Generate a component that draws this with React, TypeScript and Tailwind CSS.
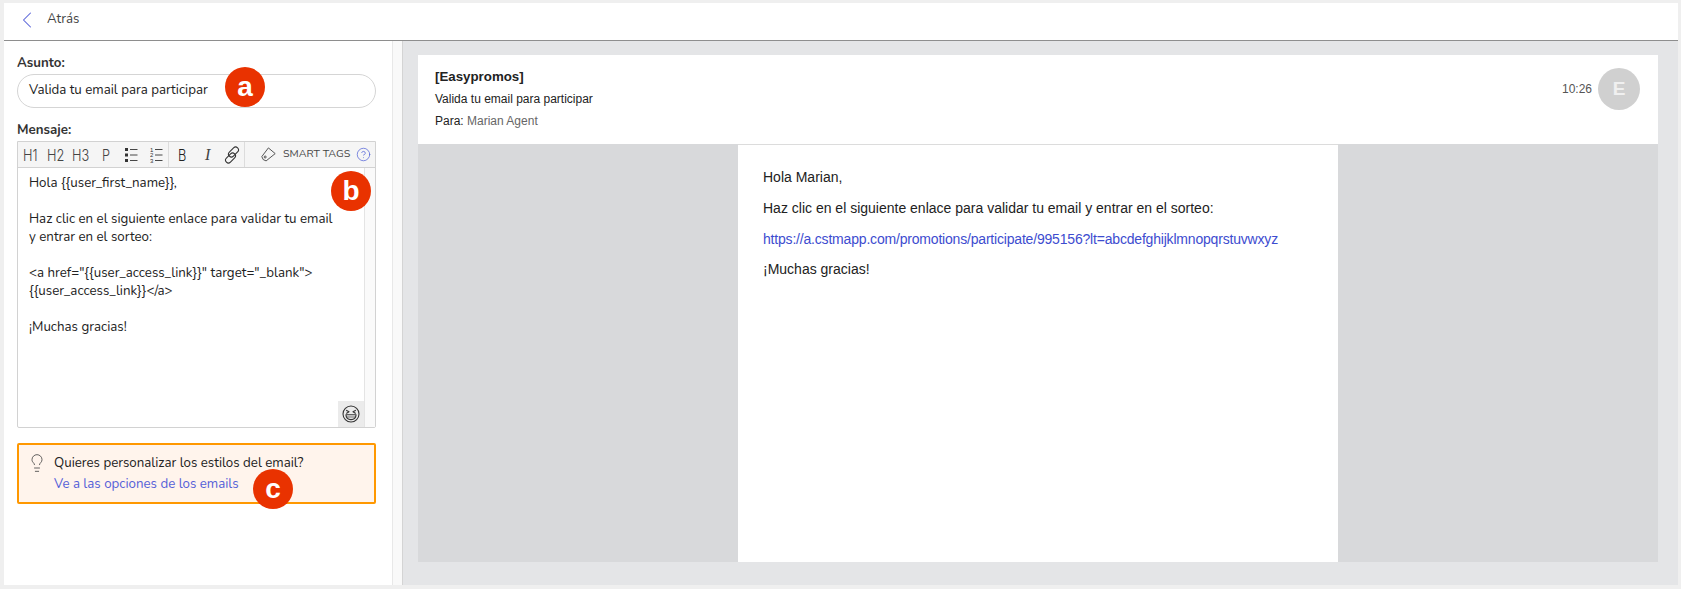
import { ChevronLeft, CircleHelp, Lightbulb } from "lucide-react";

function Badge({ letter, className }: { letter: string; className: string }) {
  return (
    <div className={`absolute flex h-10 w-10 items-center justify-center rounded-full bg-[#e93200] text-[28px] font-bold leading-none text-white font-['Liberation_Sans',sans-serif] ${className}`}>
      <span className="-mt-px">{letter}</span>
    </div>
  );
}

function ListIcon({ numbered }: { numbered?: boolean }) {
  return (
    <svg width="13" height="16" viewBox="0 0 13 16" className="text-[#333]">
      {[2.5, 8, 13.5].map((y, i) =>
        numbered ? (
          <text key={y} x="0" y={y + 2} fontSize="6" fill="currentColor" fontFamily="Liberation Sans">{i + 1}</text>
        ) : (
          <rect key={y} x="0" y={y - 1.5} width="3" height="3" fill="currentColor" />
        )
      )}
      {[2.5, 8, 13.5].map((y) => (
        <path key={y} d={`M5 ${y}H12.5`} stroke="currentColor" strokeWidth="0.9" />
      ))}
    </svg>
  );
}

function ChainIcon() {
  return (
    <svg width="18" height="18" viewBox="0 0 17 17" fill="none" stroke="#333" strokeWidth="1">
      <rect x="7.2" y="0.2" width="5.4" height="11" rx="2.7" transform="rotate(45 9.9 5.7)" />
      <rect x="4.4" y="5.8" width="5.4" height="11" rx="2.7" transform="rotate(45 7.1 11.3)" />
    </svg>
  );
}

function TagIcon() {
  return (
    <svg width="15" height="15" viewBox="0 0 15 15" fill="none" stroke="#444" strokeWidth="0.9" strokeLinejoin="round">
      <path d="M0.8 9.6 L7.4 0.9 L14.2 6.6 L5.1 13.9 Q1.4 13.4 0.8 9.6 Z" />
      <circle cx="4.2" cy="10" r="1" />
    </svg>
  );
}

function LaughIcon() {
  return (
    <svg width="18" height="18" viewBox="0 0 18 18" fill="none" stroke="#333" strokeWidth="1.1" strokeLinejoin="round" strokeLinecap="round">
      <circle cx="9" cy="9" r="8" />
      <path d="M4.6 5.4 L7 6.8 L4.6 8.2" />
      <path d="M13.4 5.4 L11 6.8 L13.4 8.2" />
      <path d="M3.9 9.8 H14.1 Q13.8 14.6 9 14.6 Q4.2 14.6 3.9 9.8 Z" />
      <path d="M4.6 12 H13.4" strokeWidth="0.7" />
    </svg>
  );
}

function Heading({ text, className }: { text: string; className: string }) {
  return (
    <span className={`block text-[16px] font-light leading-none font-['Inter',sans-serif] ${className}`}>
      <span className="inline-block origin-left scale-x-[0.8]">{text}</span>
    </span>
  );
}

export default function App() {
  const ui = "font-['Nunito','Noto_Sans','Open_Sans',sans-serif]";
  return (
    <div className={`flex h-[589px] w-[1681px] flex-col overflow-hidden bg-[#efefef] pb-1 pl-1 pr-[3px] pt-[3px] ${ui}`}>
      <header className="flex h-[38px] shrink-0 items-center border-b border-[#8e8e8e] bg-white">
        <ChevronLeft className="ml-[9px] -mt-[3px] h-[28px] w-[28px] text-[#5560d8]" strokeWidth={0.9} />
        <span className="ml-[6px] -mt-[3px] text-[13.3px] text-[#444]">Atrás</span>
      </header>

      <div className="flex min-h-0 flex-1">
        <aside className="relative w-[388px] shrink-0 bg-white pl-[13px] pr-[16px]">
          <label className="mt-[13px] block h-[18px] text-[13.3px] font-bold leading-[18px] text-[#333]">Asunto:</label>
          <div className="mt-[2px] flex h-[34px] items-center rounded-full border border-[#d5d5d5] bg-white pl-[11px] text-[13.3px] text-[#222]">
            Valida tu email para participar
          </div>
          <label className="mt-[13px] block h-[18px] text-[13.3px] font-bold leading-[18px] text-[#333]">Mensaje:</label>

          <div className="mt-[2px] h-[287px] rounded-b-[2px] border border-[#d2d2d2]">
            <div className="flex h-[26px] items-center border-b border-[#d2d2d2] bg-[#f5f5f5] text-[#444]">
              <div className="flex h-full w-[151px] items-center border-r border-[#dcdcdc] pl-[5px]">
                <Heading text="H1" className="w-[24px]" />
                <Heading text="H2" className="w-[25px]" />
                <Heading text="H3" className="w-[30px]" />
                <Heading text="P" className="w-[23px]" />
                <span className="w-[25px]"><ListIcon /></span>
                <ListIcon numbered />
              </div>
              <div className="flex h-full w-[76px] items-center border-r border-[#dcdcdc] pl-[9px]">
                <Heading text="B" className="w-[27px] text-[#222]" />
                <span className="w-[18px] text-[16px] italic leading-none text-[#444] font-['Liberation_Serif',serif]">I</span>
                <ChainIcon />
              </div>
              <div className="flex h-full flex-1 items-center pl-[16px]">
                <TagIcon />
                <span className="ml-[7px] -mt-px text-[10.7px] text-[#444]">SMART TAGS</span>
                <CircleHelp className="ml-[6px] h-[15px] w-[15px] text-[#5565d8]" strokeWidth={1.2} />
              </div>
            </div>
            <div className="flex h-[259px]">
              <div className="relative flex-1 px-[11px] pt-[6px] text-[13.3px] leading-[18px] text-[#222]">
                <p>Hola {"{{user_first_name}},"}</p>
                <p className="mt-[18px] whitespace-nowrap">Haz clic en el siguiente enlace para validar tu email</p>
                <p>y entrar en el sorteo:</p>
                <p className="mt-[18px] whitespace-nowrap">{'<a href="{{user_access_link}}" target="_blank">'}</p>
                <p>{"{{user_access_link}}</a>"}</p>
                <p className="mt-[18px]">¡Muchas gracias!</p>
                <div className="absolute bottom-0 right-0 flex h-[26px] w-[26px] items-center justify-center bg-[#ebebeb]">
                  <LaughIcon />
                </div>
              </div>
              <div className="w-[11px] border-l border-[#e4e4e4] bg-[#fafafa]" />
            </div>
          </div>

          <div className="mt-[15px] flex h-[61px] rounded-[2px] border-2 border-[#ff9800] bg-[#fff4ec] pl-[8px] pt-[8px] text-[13.3px] leading-[21px]">
            <Lightbulb className="h-[20px] w-[20px] text-[#444]" strokeWidth={1} />
            <div className="ml-[7px]">
              <div className="text-[#222]">Quieres personalizar los estilos del email?</div>
              <div className="text-[#5560d8]">Ve a las opciones de los emails</div>
            </div>
          </div>

          <Badge letter="a" className="left-[221px] top-[26px]" />
          <Badge letter="b" className="left-[327px] top-[130px]" />
          <Badge letter="c" className="left-[249px] top-[428px]" />
        </aside>

        <div className="w-[10px] shrink-0 border-l border-[#e8e8e8] bg-[#f9f9f9]" />
        <div className="w-px shrink-0 bg-[#d4d4d4]" />

        <main className="flex min-w-0 flex-1 flex-col bg-[#e4e5e7] pb-[23px] pl-[15px] pr-[20px] pt-[14px] font-['Liberation_Sans',sans-serif]">
          <div className="flex h-[89px] shrink-0 justify-between bg-white pl-[17px] pr-[18px]">
            <div className="pt-[11px] text-[12px] leading-[22px] text-[#222]">
              <div className="text-[13.3px] font-bold">[Easypromos]</div>
              <div>Valida tu email para participar</div>
              <div>Para: <span className="text-[#666]">Marian Agent</span></div>
            </div>
            <div className="flex items-start pt-[13px]">
              <span className="mr-[6px] mt-[13px] text-[12px] leading-[16px] text-[#555]">10:26</span>
              <div className="flex h-[42px] w-[42px] items-center justify-center rounded-full bg-[#d0d0d0] text-[19px] font-bold text-[#f0f0f0]">E</div>
            </div>
          </div>
          <div className="flex min-h-0 flex-1 justify-center bg-[#d8d9db]">
            <div className="w-[600px] border-t border-[#dcdcdc] bg-white pl-[25px] pr-6 pt-[22px] text-[14px] leading-[20px] text-[#222]">
              <p>Hola Marian,</p>
              <p className="mt-[11px]">Haz clic en el siguiente enlace para validar tu email y entrar en el sorteo:</p>
              <p className="mt-[11px] tracking-[-0.19px] text-[#3d4ccf]">https://a.cstmapp.com/promotions/participate/995156?lt=abcdefghijklmnopqrstuvwxyz</p>
              <p className="mt-[10px]">¡Muchas gracias!</p>
            </div>
          </div>
        </main>
      </div>
    </div>
  );
}
